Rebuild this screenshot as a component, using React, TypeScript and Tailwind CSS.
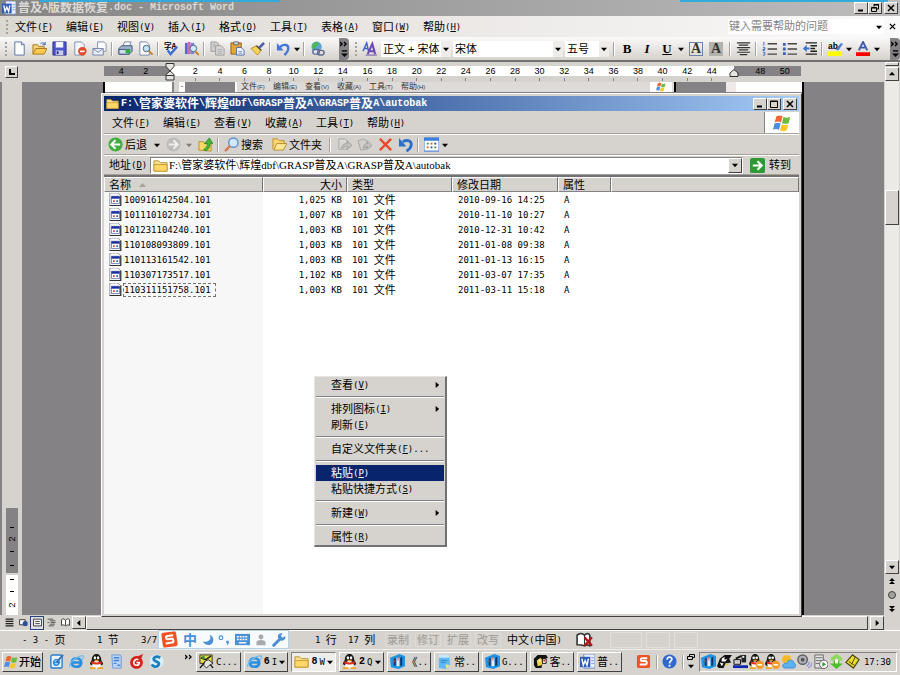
import { Fragment, useState } from 'react';
import type { ReactNode } from 'react';

const raised = 'border border-t-white border-l-white border-b-[#424142] border-r-[#424142] bg-[#d6d3ce]';
const sunken = 'border border-t-[#848284] border-l-[#848284] border-b-white border-r-white';

// Wide characters are set larger than the narrow ones, access keys like (F) are underlined
function Label({ text, bold = false }: { text: string; bold?: boolean }) {
  const runs = text.split(/([\u3000-\u9fff]+|\([A-Z]\))/).filter(Boolean);
  return (
    <span className={`inline-flex items-center whitespace-pre leading-3 ${bold ? 'font-bold' : ''}`}>
      {runs.map((run, i) => {
        if (/[\u3000-\u9fff]/.test(run)) {
          return <span key={i} className={bold ? 'text-[12px]' : 'text-[11px]'}>{run}</span>;
        }
        const key = /^\(([A-Z])\)$/.exec(run);
        return (
          <span key={i} className={bold ? "font-['Liberation_Mono',monospace] text-[10px]" : "font-['DejaVu_Sans_Mono',monospace] text-[9px]"}>
            {key ? <>(<u>{key[1]}</u>)</> : run}
          </span>
        );
      })}
    </span>
  );
}

const glyphs: Record<string, ReactNode> = {
  newDoc: <><path d="M3 1h7l3 3v11H3z" fill="#fff" stroke="#5272a8" /><path d="M10 1v3h3" fill="#cfe0f5" stroke="#5272a8" /></>,
  open: <><path d="M1 14V4h5l1 2h6v3" fill="#f8d775" stroke="#a77822" /><path d="M1 14l3-6h12l-3 6z" fill="#fbc94d" stroke="#a77822" /><path d="M9 3c2-2 4-1 5 1M14 1v3h-3" fill="none" stroke="#3a5d9e" /></>,
  save: <><path d="M1 1h14v14H1z" fill="#4b55c8" stroke="#2a2f85" /><path d="M4 1h8v6H4z" fill="#f2f4ff" /><path d="M4 10h8v5H4z" fill="#c9cdea" /><path d="M5 11h2v3H5z" fill="#2a2f85" /></>,
  permission: <><path d="M3 1h7l3 3v11H3z" fill="#f4f7fc" stroke="#7d8db0" /><circle cx="11" cy="11" r="4.5" fill="#e24b2b" /><path d="M8.500 10.200h5v1.700h-5z" fill="#fff" /></>,
  mail: <><path d="M6 1h7l2 2v8H6z" fill="#fff" stroke="#7d8db0" /><path d="M1 8h11v7H1z" fill="#e9edf8" stroke="#7382ad" /><path d="M1 8l5.500 4L12 8" fill="none" stroke="#7382ad" /></>,
  print: <><path d="M5 6l2-5h7l-2 5z" fill="#fff" stroke="#7382ad" /><path d="M1 8l3-3h11v6l-3 3H1z" fill="#9fb0cd" stroke="#3f5480" /><path d="M1 9h11v5H1z" fill="#d2dced" stroke="#3f5480" /><path d="M8 9h5v4H8z" fill="#2fae3a" /></>,
  preview: <><path d="M2 1h7l3 3v11H2z" fill="#fff" stroke="#7382ad" /><circle cx="9" cy="8" r="3.500" fill="#bfe2f7" stroke="#47617f" /><path d="M11.500 10.500l4 4" stroke="#c47e1d" strokeWidth="2" /></>,
  spell: <><text x="0" y="8" fontSize="8" fontWeight="bold" fontFamily="Noto Sans CJK SC">字A</text><path d="M4 10l3 4 7-8" fill="none" stroke="#3b6fd6" strokeWidth="2.500" /></>,
  research: <><path d="M1 2h3v12H1z" fill="#5a68c9" /><path d="M4 1h3v13H4z" fill="#d06bb0" /><path d="M7 2h4v12H7z" fill="#7d86d8" /><circle cx="10" cy="8" r="3.500" fill="#cfeafa" stroke="#47617f" /><path d="M12 11l4 4" stroke="#c47e1d" strokeWidth="2" /></>,
  copy: <><path d="M1 1h6l2 2v8H1z" fill="#d0d0d0" stroke="#9c9c9c" /><path d="M6 5h6l3 3v7H6z" fill="#d8d8d8" stroke="#9c9c9c" /><path d="M8 9h5M8 11h5M8 13h5M3 4h3M3 6h2" stroke="#aaa" /></>,
  paste: <><path d="M1 2h11v12H1z" fill="#e7a735" stroke="#8a5c14" /><path d="M4 1h5v3H4z" fill="#ddd" stroke="#666" /><path d="M7 7h5l3 3v5H7z" fill="#f5f8ff" stroke="#4c66a6" /><path d="M9 11h4M9 13h4" stroke="#6e8ac4" /></>,
  painter: <><path d="M9 6l5-5 2 2-5 5z" fill="#4a5fae" /><path d="M1 8l6-3 5 5-4 5z" fill="#f5d45c" stroke="#b78b24" /><path d="M7 5l5 5" stroke="#444" strokeWidth="1.500" /></>,
  undo: <><path d="M4 7c4-5 10-3 9 2-.4 3-2 4-4 6" fill="none" stroke="#3f78d8" strokeWidth="2.500" /><path d="M1 2v8h7z" fill="#3f78d8" /></>,
  link: <><circle cx="7" cy="6" r="5.500" fill="#5aa5d6" /><path d="M3 3c3-3 6-2 6 0S6 5 6 8 3 8 2 6z" fill="#4ab850" /><rect x="3" y="9" width="7" height="5" rx="2.500" fill="#e6ebf5" stroke="#5a6a92" strokeWidth="1.500" /><rect x="8" y="10" width="7" height="5" rx="2.500" fill="none" stroke="#5a6a92" strokeWidth="1.500" /></>,
  styles: <><path d="M1 11L5 2l2 9M2 8h4" fill="none" stroke="#3d64c4" strokeWidth="1.500" /><path d="M6 14l5-11 3 11M8 11h5" fill="none" stroke="#6a47b5" strokeWidth="2.200" /><path d="M4 15h12" stroke="#6a47b5" /></>,
  center: <path d="M1 2h14M3 4.500h10M1 7h14M3 9.500h10M1 12h14M4 14.500h8" stroke="#333" strokeWidth="1.300" />,
  numbered: <><path d="M2 1v4M1 7h2v2H1v1h2M1 12h2v3H1" fill="none" stroke="#3b62c4" /><path d="M6 3h10M6 8.500h10M6 14h10" stroke="#444" strokeWidth="1.500" /></>,
  bullets: <><path d="M1 2h3v3H1zM1 7h3v3H1zM1 12h3v3H1z" fill="#3b62c4" /><path d="M6 3h10M6 8.500h10M6 14h10" stroke="#444" strokeWidth="1.500" /></>,
  indent: <><path d="M4 2h12M9 5h7M9 8h5M9 11h7M4 14h12" stroke="#222" strokeWidth="1.500" /><path d="M1 8l4-4v3h3v2H5v3z" fill="#3b76d8" /></>,
  highlight: <><text x="0" y="9" fontSize="9" fontWeight="bold" fontFamily="Liberation Sans">ab</text><path d="M8 9l6-7 2 1-5 7z" fill="#4a7ccc" /><path d="M0 11h15v5H0z" fill="#ff0" /></>,
  fontColor: <><path d="M3 10L7.500 1 12 10M5 7h5" fill="none" stroke="#3c5ca8" strokeWidth="2" /><path d="M0 12h15v4H0z" fill="red" /></>,
  word: <><path d="M4 0h12v15H4z" fill="#e9f0fc" stroke="#6c8bc9" /><path d="M12 4h3M12 7h3M12 10h3" stroke="#7b9bd6" /><path d="M0 3h11v11H0z" fill="#2c5bb8" /><path d="M2 5l1.500 7 2-5 2 5L9 5" fill="none" stroke="#fff" strokeWidth="1.500" /></>,
  folder: <><path d="M1 14V3h5l2 2h7v9z" fill="#fbe28c" stroke="#b8902e" /><path d="M1 7h14v7H1z" fill="#fdd867" stroke="#c99b35" /></>,
  folderOpen: <><path d="M1 13V2h5l2 2h5v4" fill="#f9d873" stroke="#bb8a27" /><path d="M2 14l3-7h11l-4 7z" fill="#fde79a" stroke="#bb8a27" /></>,
  back: <><circle cx="8" cy="8" r="7.500" fill="#3fae3c" /><path d="M8 3.500L3.500 8 8 12.500M4 8h9" fill="none" stroke="#fff" strokeWidth="2.200" /></>,
  forward: <><circle cx="8" cy="8" r="7.500" fill="#bdbcba" /><path d="M8 3.500L12.500 8 8 12.500M12 8H3" fill="none" stroke="#eee" strokeWidth="2.200" /></>,
  up: <><path d="M1 14V5h5l1 2h7v8z" fill="#fbd766" stroke="#b98d2c" /><path d="M6 13c3-1 4-3 4-6H7l5-6 4 6h-3c0 4-2 7-5 8z" fill="#44b53b" stroke="#217d1d" strokeWidth=".7" /></>,
  search: <><circle cx="10" cy="6" r="5" fill="#cfe8fb" stroke="#5b8ed3" strokeWidth="1.500" /><path d="M6.500 9.500L1 15" stroke="#d27b54" strokeWidth="2.500" /></>,
  moveTo: <><path d="M2 2h7l2 2v9H2z" fill="#d9d8d5" stroke="#a5a4a1" /><path d="M5 12c0-4 3-5 6-5V4l5 5-5 4v-3c-3 0-4 1-6 2z" fill="#c2c1be" stroke="#a09f9c" /></>,
  copyTo: <><path d="M1 4l6-2 4 3-1 8-6 1z" fill="#d0cfcc" stroke="#a5a4a1" /><path d="M7 12c0-4 2-5 4-5V4l5 5-5 4v-3z" fill="#c2c1be" stroke="#a09f9c" /></>,
  remove: <path d="M2 2l12 12M14 2L2 14" stroke="#e8492b" strokeWidth="2.500" />,
  undoBlue: <><path d="M5 5c6-3 10 0 9 4-.4 3-3 5-5 6" fill="none" stroke="#2a6fc9" strokeWidth="3" /><path d="M1 1v9h8z" fill="#2a6fc9" /></>,
  views: <><rect x="0" y="1" width="16" height="14" fill="#fff" stroke="#2e6fd0" /><path d="M0 1h16v3H0z" fill="#3b7ee0" /><path d="M3 6h2v2H3zM11 10h2v2h-2z" fill="#3b8f46" /><path d="M7 6h2v2H7zM3 10h2v2H3z" fill="#d95b2c" /><path d="M11 6h2v2h-2zM7 10h2v2H7z" fill="#2a4ea5" /></>,
  go: <><rect x="0" y="0" width="16" height="16" rx="2" fill="#2f9a35" /><path d="M3 8h9M8 3.500L12.500 8 8 12.500" fill="none" stroke="#fff" strokeWidth="2.200" /></>,
  flag: <><path d="M3 2c2-1 4-1 5.500 0L7 7.500c-2-1-3.500-1-5.500 0z" fill="#ee6633" /><path d="M9.300 2.500c2 1 3.500 1 6 0L14 8c-2 1-4 1-6 0z" fill="#6dbb3f" /><path d="M1.300 8.500c2-1 3.500-1 5.500 0L5.300 14c-2-1-3.500-1-5.300 0z" fill="#4a8fe0" /><path d="M7.700 9c2 1 3.800 1 6 0l-1.500 5.500c-2 1-4 1-6 0z" fill="#f9c728" /></>,
  file: <><path d="M1 0h10l3 3v13H1z" fill="#fff" stroke="#848284" /><path d="M14.500 3v12.500H1" fill="none" stroke="#333" strokeWidth="1.500" /><path d="M3 4h10v9H3z" fill="#fff" stroke="#5a6fae" /><path d="M3 4h10v3H3z" fill="#1b2f9f" /><path d="M5 9h2v2H5z" fill="#d33" /><path d="M9 9h2v2H9z" fill="#2858c8" /></>,
  ieDoc: <><rect x="2" y="1" width="12" height="14" rx="2" fill="#e8f4fd" stroke="#2b7fc9" strokeWidth="1.500" /><path d="M11 9c-1 4-6 4-6 0s6-4 6 0H5" fill="none" stroke="#2484d8" strokeWidth="1.500" /><path d="M8 9l7-8" stroke="#3a72b5" strokeWidth="2" /></>,
  ie: <><path d="M13 10c-1 5-10 5-10-1s10-6 10 0H4" fill="none" stroke="#2a8fe0" strokeWidth="2.800" /><path d="M1 14C-1 10 9 1 15 2c1 1 0 3-1 4" fill="none" stroke="#6fbdf2" strokeWidth="1.300" /></>,
  qq: <><path d="M1 11c0-3 2-4 2-5 0-8 10-8 10 0 0 1 2 2 2 5l-2 1H3z" fill="#181818" /><ellipse cx="8" cy="11.500" rx="4.500" ry="4" fill="#fff" /><ellipse cx="6.300" cy="4" rx="1.300" ry="1.600" fill="#fff" /><ellipse cx="9.700" cy="4" rx="1.300" ry="1.600" fill="#fff" /><path d="M4.500 6h7L8 8z" fill="#f3a51c" /><path d="M2.500 7.500c3 2 8 2 11 0v2.500c-3 1.500-8 1.500-11 0z" fill="#e0301e" /><path d="M1 14h6v2H1zM9 14h6v2H9z" fill="#f3a51c" /></>,
  qqBusy: <><path d="M0 11c0-3 2-4 2-5 0-8 9-8 9 0 0 1 2 2 2 5l-2 2H2z" fill="#181818" /><circle cx="5" cy="4" r="1.400" fill="#fff" /><circle cx="8.200" cy="4" r="1.400" fill="#fff" /><path d="M3.500 6h6l-3 2z" fill="#f3a51c" /><ellipse cx="6" cy="11.500" rx="3.500" ry="3.500" fill="#fff" /><path d="M2 7.500c3 2 6 2 9 0V10c-3 1.500-6 1.500-9 0z" fill="#e0301e" /><path d="M1 14h6v2H1z" fill="#f3a51c" /><circle cx="11.500" cy="11.500" r="4.500" fill="#f39a2b" /><path d="M9 10.700h5v1.700H9z" fill="#fff" /></>,
  page: <><path d="M3 1h9l1 2v12H4z" fill="#b9d6f7" stroke="#6c9ad6" /><path d="M5 4h6M5 7h6M5 10h3M9 12h3" stroke="#4d82d0" strokeWidth="1.500" /></>,
  redG: <><circle cx="8" cy="9" r="6.800" fill="#d8201a" /><path d="M10 6c-5-2-7 6-2 6 3 0 3-3 3-3H8" fill="none" stroke="#fff" strokeWidth="1.700" /><path d="M8 3l7-3-2 5z" fill="#d8201a" /></>,
  sBlue: <><circle cx="8" cy="8" r="7.500" fill="#d9effb" /><path d="M12 4C7 1 3 5 6 7s6 2 4 5-6 1-7-1" fill="none" stroke="#1c7fbd" strokeWidth="3" /></>,
  cjkTool: <><path d="M1 1h13v9H1z" fill="#e8df3d" stroke="#333" /><path d="M2 4l5 2 6-4M1 15l5-6 5 1 4 5" fill="none" stroke="#222" strokeWidth="1.500" /><path d="M6 8l4-2 5 4-4 2-3 3-3-3z" fill="#e4e4e4" stroke="#222" /><path d="M3 2h3v3H3z" fill="#3a9a3e" /></>,
  books: <><path d="M0 4l10-4 6 2v11l-7 3-8-2z" fill="#1d94e4" /><path d="M4 5l2-1v9l-2-1z" fill="#182c58" /><path d="M7 4h3v9H7z" fill="#e8eef5" /><path d="M11 4l2-1v9l-2 1z" fill="#10315e" /><path d="M4 6h1v3H4zM8 3h1v4H8z" fill="#e33" /></>,
  notes: <><path d="M2 1h11l1 11-4 4-8-1z" fill="#5eb8f2" /><path d="M2 1h11v3H2z" fill="#c6e8fb" /><path d="M10 16l4-4-5-1z" fill="#f3e08a" /><path d="M4 7h7M4 9h5" stroke="#2f87c9" /></>,
  face: <><path d="M1 12V5l4-4h9l2 3-3 1v4l-3 1-1 5H3z" fill="#111" /><path d="M4 7l4-3 3 4-2 4-4 1z" fill="#f4d34a" /><path d="M10 5h4v5h-4z" fill="#fff" stroke="#111" /><path d="M11 6h2v2h-2z" fill="#d22" /><path d="M6 6h2v2H6z" fill="#fff" /></>,
  bwCat: <><path d="M0 13l3-8 5-4h8l-3 4 2 4-6 1-2 5H2z" fill="#111" /><path d="M5 5l3-2v3l3-1-2 3H5zM3 9l4 1-2 3z" fill="#fff" /><path d="M9 10h3v2H9z" fill="#e8c82c" /></>,
  network: <><path d="M1 6h7v5H1z" fill="#ccc" stroke="#111" /><path d="M9 1h5v8H9z" fill="#222" /><path d="M10 2h2v2h-2z" fill="#fff" /><path d="M0 12h16v3H0z" fill="#1326b5" /><path d="M3 5l6-3" stroke="#111" strokeWidth="2" /></>,
  weather: <><circle cx="6" cy="6" r="5" fill="#fbb829" /><path d="M4 15c-4-1-2-6 2-5 1-5 8-4 8 0 3 1 2 5-1 5z" fill="#5cb2f0" stroke="#3f92d5" /></>,
  speaker: <><circle cx="6" cy="6" r="5" fill="#aeb0b5" stroke="#5d5f66" strokeWidth="1.500" /><circle cx="6" cy="6" r="2" fill="#555" /><path d="M10 13c2-1 3-2 3-5M12 15c3-2 4-4 4-6" fill="none" stroke="#8f97d8" strokeWidth="1.300" /></>,
  server: <><path d="M2 1h9v14H2z" fill="#e3e3e3" stroke="#666" /><path d="M3 4h7M3 7h7M3 10h4" stroke="#666" /><circle cx="11.500" cy="11" r="4.500" fill="#fff" stroke="#555" /><path d="M10 8.500l4 2.500-4 2.500z" fill="#25a32d" /></>,
  download: <><path d="M8 0l6 4v3h-3l-3-3-3 3H2V4z" fill="#8bdc4e" /><path d="M5 7h6v3h4l-7 6-7-6h4z" fill="#4bbf27" /><path d="M6.500 6h3v4h-3z" fill="#fff" /></>,
  tag: <><path d="M1 9l7-8 7 5-6 9z" fill="#e9dc2a" stroke="#4f4a10" strokeWidth="1.300" /><path d="M4 8l6 4M11 3l-4 8" stroke="#4f4a10" /></>,
  sogou: <><rect x="1" y="1" width="14" height="14" rx="2" fill="#ee5423" /><path d="M12 4.500H6.500c-2 0-2 3 0 3H10c2 0 2 3.700 0 3.700H4" fill="none" stroke="#fff" strokeWidth="2" /></>,
  sogouTilt: <g transform="rotate(-8 8 8)"><rect x="1" y="1" width="14" height="14" rx="2" fill="#ee5423" /><path d="M12 4.500H6.500c-2 0-2 3 0 3H10c2 0 2 3.700 0 3.700H4" fill="none" stroke="#fff" strokeWidth="2" /></g>,
  help: <><circle cx="8" cy="8" r="7.500" fill="#2f68cf" /><path d="M5.500 6c0-4 5.500-3 5 0-.4 1.500-2.500 1.500-2.500 4" fill="none" stroke="#fff" strokeWidth="1.800" /><path d="M7 11.500h2v2H7z" fill="#fff" /></>,
  moon: <path d="M10 1c4 6-2 11-9 9 4 7 14 6 14-2 0-4-2-6-5-7z" fill="#4a8fd6" />,
  punct: <><circle cx="4" cy="5" r="2.500" fill="none" stroke="#4a8fd6" strokeWidth="1.500" /><path d="M11 9h3c1 3 0 5-2 6v-3h-1z" fill="#4a8fd6" /></>,
  keyboard: <><rect x="0" y="2" width="16" height="12" fill="#4a8fd6" /><path d="M2 5h12M2 8h12" stroke="#fff" strokeWidth="1.500" strokeDasharray="2 1" /><path d="M4 11.500h8" stroke="#fff" strokeWidth="1.500" /></>,
  person: <><circle cx="8" cy="4" r="3.300" fill="#aaa" /><path d="M2 15V11c0-4 12-4 12 0v4z" fill="#aaa" /></>,
  wrench: <><path d="M2 14l8-8" stroke="#4a8fd6" strokeWidth="3.500" strokeLinecap="round" /><path d="M15 3.500l-3 2-2-2 2-3c-4-1-6 2-5 5l3 3c3 1 6-1 5-5z" fill="#4a8fd6" /></>,
  bookX: <><path d="M1 12V3c2-2 5-2 7 0 2-2 4-2 5 0v10c-2-1-4-1-5 0-2-1-5-1-7-1z" fill="#fff" stroke="#333" strokeWidth="1.500" /><path d="M8 3v10" stroke="#333" /><path d="M8 5l7 8M15 5l-7 8" stroke="#b01818" strokeWidth="2.200" /></>,
  normalView: <path d="M1 2h14M1 6h14M1 10h14M1 14h14" stroke="#222" strokeWidth="1.800" />,
  webView: <><path d="M1 3h10v9H1z" fill="#fff" stroke="#222" strokeWidth="1.500" /><circle cx="11" cy="10" r="4.500" fill="#2b4f9b" /></>,
  printView: <><path d="M1 2h14v12H1z" fill="#fff" stroke="#222" strokeWidth="1.500" /><path d="M4 6h8M4 10h8" stroke="#222" strokeWidth="1.500" /></>,
  outline: <path d="M1 2h10M5 5h10M1 8h3M7 8h8M5 11h9M3 14h9" stroke="#444" strokeWidth="1.500" />,
  reading: <path d="M8 4C5 1 3 1 1 3v10c2-1 4-1 7 1 3-2 5-2 7-1V3c-2-2-4-2-7 1v9" fill="#fff" stroke="#222" strokeWidth="1.500" />,
};

function Icon({ name, size = 'size-[15px]' }: { name: string; size?: string }) {
  return (
    <svg viewBox="0 0 16 16" className={`${size} shrink-0`} aria-hidden="true">
      {glyphs[name]}
    </svg>
  );
}

function Arrow({ dir = 'down' }: { dir?: 'down' | 'up' | 'left' | 'right' }) {
  const shapes = { down: 'M0 2h7L3.500 6z', up: 'M0 5h7L3.500 1z', left: 'M5 0v7L1 3.500z', right: 'M2 0v7l4-3.500z' };
  return (
    <svg viewBox="0 0 7 7" className="size-[6px] shrink-0" aria-hidden="true">
      <path d={shapes[dir]} />
    </svg>
  );
}

function Tool({ name, label }: { name: string; label: string }) {
  return (
    <button type="button" aria-label={label} className="flex h-5 w-5 shrink-0 items-center justify-center">
      <Icon name={name} />
    </button>
  );
}

function Caret({ label }: { label: string }) {
  return (
    <button type="button" aria-label={label} className="flex h-5 w-2 shrink-0 items-center justify-center">
      <Arrow />
    </button>
  );
}

const Divider = () => <div className="mx-[2px] h-[14px] w-[2px] shrink-0 border-l border-[#a5a29c] border-r border-r-white" />;

const Overflow = () => (
  <button type="button" aria-label="工具栏选项" className="flex h-[22px] w-[10px] shrink-0 flex-col items-center justify-between rounded-r-sm bg-[#848284] py-[3px]">
    <svg viewBox="0 0 8 6" className="h-[6px] w-2"><path d="M0 1l2 2-2 2M4 1l2 2-2 2" fill="none" stroke="#000" strokeWidth="1.500" /></svg>
    <svg viewBox="0 0 8 8" className="size-[7px]"><path d="M1 1h6" stroke="#000" strokeWidth="1.500" /><path d="M0 4h8L4 8z" /></svg>
  </button>
);

const Grip = () => (
  <div className="flex w-[6px] shrink-0 flex-col items-center gap-[2px]">
    {[0, 1, 2, 3].map((i) => <span key={i} className="size-[2px] bg-[#a5a29c]" />)}
  </div>
);

function Combo({ label, value, width }: { label: string; value: string; width: string }) {
  return (
    <div className={`relative ml-[2px] h-4 shrink-0 bg-white ${width}`}>
      <select aria-label={label} defaultValue={value} className="block h-[14px] w-full appearance-none pl-[2px] text-[11px] leading-4 outline-none">
        <option>{value}</option>
      </select>
      <span className="pointer-events-none absolute inset-y-0 right-0 flex w-[10px] items-center justify-center bg-[#efedea]"><Arrow /></span>
    </div>
  );
}

function CaptionButtons({ restore = false }: { restore?: boolean }) {
  const button = `flex h-3 w-[14px] items-center justify-center ${raised}`;
  return (
    <div className="ml-auto flex shrink-0 pr-[2px]">
      <button type="button" aria-label="最小化" className={button}>
        <svg viewBox="0 0 8 8" className="size-2"><path d="M1 6.500h5" stroke="#000" strokeWidth="2" /></svg>
      </button>
      <button type="button" aria-label={restore ? '还原' : '最大化'} className={button}>
        <svg viewBox="0 0 8 8" className="size-2">
          {restore
            ? <path d="M3 2.500V.5h4.500V5H5.500M.5 3.500h5v4h-5zM3 1h5M.5 4h5" fill="none" stroke="#000" />
            : <path d="M.5 1h7v6.500h-7zM.5 1.500h7" fill="none" stroke="#000" />}
        </svg>
      </button>
      <button type="button" aria-label="关闭" className={`ml-[2px] ${button}`}>
        <svg viewBox="0 0 8 8" className="size-2"><path d="M1 1l6 6M7 1L1 7" stroke="#000" strokeWidth="1.500" /></svg>
      </button>
    </div>
  );
}

const wordMenus = ['文件(F)', '编辑(E)', '视图(V)', '插入(I)', '格式(O)', '工具(T)', '表格(A)', '窗口(W)', '帮助(H)'];
const folderMenus = ['文件(F)', '编辑(E)', '查看(V)', '收藏(A)', '工具(T)', '帮助(H)'];

function WordHeader() {
  return (
    <header className="shrink-0">
      <div className="relative flex h-4 items-center bg-linear-to-r from-[#858585] to-[#bdbdbd] pl-[2px] text-[#dddad5]">
        <div className="absolute left-10 top-0 h-[2px] w-60 bg-[#35a9d8]" />
        <div className="absolute right-3 top-0 h-[2px] w-52 bg-[#35a9d8]" />
        <Icon name="word" size="size-[14px]" />
        <h1 className="ml-[2px] flex"><Label bold text="普及A版数据恢复.doc - Microsoft Word" /></h1>
        <CaptionButtons restore />
      </div>
      <div className="flex h-[21px] items-center bg-linear-to-r from-[#dbd7d1] via-[#ebe8e6] to-[#fbfafa] pl-1">
        <Grip />
        <nav className="ml-[5px] flex">
          {wordMenus.map((item) => (
            <button key={item} type="button" className="flex w-[51px] items-center"><Label text={item} /></button>
          ))}
        </nav>
        <div className="ml-auto flex h-[15px] w-[156px] items-center bg-white pr-[2px]">
          <input aria-label="键入需要帮助的问题" placeholder="键入需要帮助的问题" className="h-[15px] min-w-0 flex-1 pl-px text-[11px] outline-none placeholder:text-[#848284]" />
          <Arrow />
        </div>
        <button type="button" aria-label="关闭文档" className="mx-1 flex w-2 justify-center">
          <svg viewBox="0 0 8 8" className="size-[7px]"><path d="M1 1l6 6M7 1L1 7" stroke="#000" strokeWidth="1.500" /></svg>
        </button>
      </div>
      <div className="flex h-[23px] items-center bg-linear-to-b from-[#fbfafa] to-[#d6d2cc] pl-[3px]">
        <Grip />
        <Tool name="newDoc" label="新建" />
        <Tool name="open" label="打开" />
        <Tool name="save" label="保存" />
        <Tool name="permission" label="权限" />
        <Tool name="mail" label="电子邮件" />
        <Divider />
        <Tool name="print" label="打印" />
        <Tool name="preview" label="打印预览" />
        <Divider />
        <Tool name="spell" label="拼写和语法" />
        <Tool name="research" label="信息检索" />
        <Divider />
        <Tool name="copy" label="复制" />
        <Tool name="paste" label="粘贴" />
        <Tool name="painter" label="格式刷" />
        <Divider />
        <Tool name="undo" label="撤消" />
        <Caret label="撤消列表" />
        <Divider />
        <Tool name="link" label="超链接" />
        <div className="w-3 shrink-0" />
        <Overflow />
        <div className="w-1 shrink-0" />
        <Grip />
        <Tool name="styles" label="格式窗格" />
        <Combo label="样式" value="正文 + 宋体" width="w-[70px]" />
        <Combo label="字体" value="宋体" width="w-[110px]" />
        <Combo label="字号" value="五号" width="w-[44px]" />
        <div className="w-[2px] shrink-0" />
        <Divider />
        <div className="flex font-['Liberation_Serif',serif] text-[13px] leading-4">
          <button type="button" aria-label="加粗" className="w-5 font-bold">B</button>
          <button type="button" aria-label="倾斜" className="w-5 font-bold italic">I</button>
          <button type="button" aria-label="下划线" className="w-5 font-bold underline">U</button>
        </div>
        <Caret label="下划线样式" />
        <div className="flex gap-[6px] px-1 font-['Liberation_Serif',serif] text-[14px] font-bold leading-3 text-[#333]">
          <button type="button" aria-label="字符边框" className="h-[14px] w-[14px] border border-[#6b82b0]">A</button>
          <button type="button" aria-label="字符底纹" className="h-[14px] w-[14px] bg-[#b5b2ad]">A</button>
        </div>
        <Divider />
        <Tool name="center" label="居中" />
        <Divider />
        <Tool name="numbered" label="编号" />
        <Tool name="bullets" label="项目符号" />
        <Tool name="indent" label="增加缩进量" />
        <Divider />
        <Tool name="highlight" label="突出显示" />
        <Caret label="突出显示颜色" />
        <Tool name="fontColor" label="字体颜色" />
        <Caret label="字体颜色列表" />
        <div className="ml-auto flex"><Overflow /></div>
      </div>
      <div className="h-[2px] bg-[#737173]" />
    </header>
  );
}

function Ruler() {
  const numbers = Array.from({ length: 22 }, (_, i) => (i + 1) * 2);
  const tick = "flex-1 text-center after:mx-auto after:mt-[2px] after:block after:h-[3px] after:w-px after:bg-[#848284] after:content-['']";
  return (
    <div className="flex h-5 shrink-0 pl-[5px] pt-1">
      <button type="button" aria-label="左对齐制表符" className={`mr-[86px] flex h-3 w-[13px] items-center justify-center ${raised}`}>
        <svg viewBox="0 0 6 6" className="size-[6px]"><path d="M1 0v5h5" fill="none" stroke="#000" strokeWidth="2" /></svg>
      </button>
      <div className="relative mr-[83px] flex h-[10px] flex-1 bg-white font-['Liberation_Sans',sans-serif] text-[9px] leading-[10px]">
        <div className="flex w-[66px] bg-[#848284] pl-[5px] pr-3"><span className="flex-1 text-center">4</span><span className="flex-1 text-center">2</span></div>
        <div className="flex flex-1 pl-[13px] pr-[10px]">
          {numbers.map((n) => <span key={n} className={tick}>{n}</span>)}
        </div>
        <div className="flex w-[67px] bg-[#848284] pl-[14px] pr-1"><span className="flex-1 text-center">48</span><span className="flex-1 text-center">50</span></div>
        <svg viewBox="0 0 10 18" className="absolute -top-[3px] left-[61px] h-[18px] w-[10px]"><path d="M1 .5h8v3L5 8l4 3.500v5.500H1v-5.500L5 8 1 3.500zM1 12.500h8" fill="#e7e5e2" stroke="#333" /></svg>
        <svg viewBox="0 0 10 8" className="absolute right-[62px] top-[3px] h-2 w-[10px]"><path d="M5 .5L9 4v3.500H1V4z" fill="#e7e5e2" stroke="#333" /></svg>
      </div>
    </div>
  );
}

function VerticalRuler() {
  return (
    <div className="flex w-[22px] shrink-0 flex-col justify-end border-l-2 border-[#848284] pl-1 text-[9px] leading-3">
      <div className="flex h-[65px] w-3 flex-col items-center justify-around bg-[#848284] pb-1 pt-4">
        <span className="h-px w-1 border-t" /><span className="-rotate-90">2</span><span className="h-px w-1 border-t" /><span className="mt-2 h-px w-1 border-t" />
      </div>
      <div className="mt-[2px] flex h-10 w-3 flex-col items-center justify-around bg-white">
        <span className="h-px w-1 border-t" /><span className="mt-1 h-px w-1 border-t" /><span className="-rotate-90">2</span>
      </div>
    </div>
  );
}

// Top edge of the picture that is embedded in the document
function EmbeddedStrip() {
  return (
    <div className="flex h-[10px] overflow-hidden bg-[#dedad8] text-[8px] leading-[9px] text-[#333]">
      <div className="w-[67px] bg-white" />
      <div className="w-[7px] border-l-2 border-[#848284] bg-[#d6d3ce]" />
      <div className="w-[6px] bg-white text-center leading-[8px]">-</div>
      <div className="w-[50px] bg-[#848284]" />
      <div className="flex flex-1 border-l-2 border-white pl-1">
        {folderMenus.map((item) => {
          const [, name, key] = /^(.+)\((.)\)$/.exec(item)!;
          return <span key={item} className="w-8 whitespace-nowrap">{name}<span className="text-[6px]">({key})</span></span>;
        })}
      </div>
      <div className="flex w-[22px] justify-center bg-white"><Icon name="flag" size="size-[10px]" /></div>
      <div className="ml-[2px] w-[52px] border-l-2 border-black bg-[#848284]" />
      <div className="w-[10px] bg-[#efe9ea]" />
      <div className="w-[66px] bg-white" />
    </div>
  );
}

const files = [
  { name: '100916142504.101', size: '1,025 KB', date: '2010-09-16 14:25' },
  { name: '101110102734.101', size: '1,007 KB', date: '2010-11-10 10:27' },
  { name: '101231104240.101', size: '1,003 KB', date: '2010-12-31 10:42' },
  { name: '110108093809.101', size: '1,003 KB', date: '2011-01-08 09:38' },
  { name: '110113161542.101', size: '1,003 KB', date: '2011-01-13 16:15' },
  { name: '110307173517.101', size: '1,102 KB', date: '2011-03-07 17:35' },
  { name: '110311151758.101', size: '1,003 KB', date: '2011-03-11 15:18' },
];

function FileTable() {
  const th = 'h-[15px] border-b border-r border-b-[#848284] border-r-[#737173] border-l border-l-white border-t border-t-white bg-[#d6d3ce] p-0 px-1 text-left font-normal leading-3';
  return (
    <div className="flex-1 border-t-2 border-[#737173] bg-[linear-gradient(to_right,#f7f7f7_159px,#ffffff_159px)]">
      <table className="w-full table-fixed border-separate border-spacing-0">
        <colgroup>
          <col className="w-[159px]" /><col className="w-[84px]" /><col className="w-[105px]" />
          <col className="w-[106px]" /><col className="w-[53px]" /><col />
        </colgroup>
        <thead>
          <tr>
            <th className={th}>
              <span className="flex items-center gap-2">
                <Label text="名称" />
                <svg viewBox="0 0 7 4" className="h-1 w-[7px]"><path d="M0 4h7L3.500 0z" fill="#a5a29c" /></svg>
              </span>
            </th>
            <th className={th}><span className="flex justify-end"><Label text="大小" /></span></th>
            <th className={th}><span className="flex"><Label text="类型" /></span></th>
            <th className={th}><span className="flex"><Label text="修改日期" /></span></th>
            <th className={th}><span className="flex"><Label text="属性" /></span></th>
            <th className={th} aria-label="空" />
          </tr>
        </thead>
        <tbody>
          {files.map((file, i) => (
            <tr key={file.name} className="h-[15px]">
              <td className="p-0 pl-[5px]">
                <span className="flex h-[15px] items-center">
                  <Icon name="file" size="size-[13px]" />
                  <span className={`ml-px flex h-[14px] items-center border pr-1 ${i === files.length - 1 ? 'border-dashed border-[#737173]' : 'border-transparent'}`}>
                    <Label text={file.name} />
                  </span>
                </span>
              </td>
              <td className="p-0 pr-[5px]"><span className="flex justify-end"><Label text={file.size} /></span></td>
              <td className="p-0 pl-[5px]"><span className="flex"><Label text="101 文件" /></span></td>
              <td className="p-0 pl-[6px]"><span className="flex"><Label text={file.date} /></span></td>
              <td className="p-0 pl-[6px]"><span className="flex"><Label text="A" /></span></td>
              <td className="p-0" />
            </tr>
          ))}
        </tbody>
      </table>
    </div>
  );
}

const contextMenu = [
  [{ text: '查看(V)', sub: true }],
  [{ text: '排列图标(I)', sub: true }, { text: '刷新(E)' }],
  [{ text: '自定义文件夹(F)...' }],
  [{ text: '粘贴(P)' }, { text: '粘贴快捷方式(S)' }],
  [{ text: '新建(W)', sub: true }],
  [{ text: '属性(R)' }],
] as { text: string; sub?: boolean }[][];

function ContextMenu() {
  const [active, setActive] = useState('粘贴(P)');
  return (
    <div role="menu" className="absolute left-[212px] top-[282px] w-[133px] border border-b-2 border-r-2 border-t-[#e7e5e2] border-l-[#e7e5e2] border-b-[#737173] border-r-[#737173] bg-[#d6d3ce] px-px">
      {contextMenu.map((group, i) => (
        <Fragment key={i}>
          {i > 0 && <div className="my-[3px] h-[2px] border-t border-[#848284] border-b border-b-white" />}
          {group.map((item) => (
            <button
              key={item.text}
              type="button"
              role="menuitem"
              onMouseEnter={() => setActive(item.text)}
              className={`flex h-4 w-full items-center justify-between pl-[15px] pr-1 ${active === item.text ? 'bg-[#08246b] text-white' : ''}`}
            >
              <Label text={item.text} />
              {item.sub && <Arrow dir="right" />}
            </button>
          ))}
        </Fragment>
      ))}
    </div>
  );
}

function Explorer() {
  const path = 'F:\\管家婆软件\\辉煌dbf\\GRASP普及A\\GRASP普及A\\autobak';
  const row = 'flex shrink-0 items-center border-b border-[#a5a29c] border-t border-t-white';
  return (
    <section className="absolute -bottom-[2px] left-[79px] right-[82px] top-[11px] z-10 flex flex-col border border-l-white border-t-white border-b-[#424142] border-r-[#424142] bg-[#d6d3ce] p-[2px]">
      <div className="flex h-[15px] shrink-0 items-center bg-linear-to-r from-[#08246b] to-[#a5cbf7] pl-[2px] text-white">
        <Icon name="folder" size="size-[13px]" />
        <h2 className="ml-[2px] flex"><Label bold text={path} /></h2>
        <CaptionButtons />
      </div>
      <div className="mt-px flex h-[22px] shrink-0 items-stretch border-b border-[#a5a29c]">
        <nav className="flex flex-1 pl-2">
          {folderMenus.map((item) => (
            <button key={item} type="button" className="flex w-[51px] items-center"><Label text={item} /></button>
          ))}
        </nav>
        <div className="flex w-[35px] items-center justify-center border-l border-[#848284] bg-white"><Icon name="flag" size="size-[18px]" /></div>
      </div>
      <div className={`${row} h-[21px] pl-1`}>
        <button type="button" className="flex items-center gap-[2px]"><Icon name="back" /><Label text="后退" /></button>
        <div className="ml-[6px] flex"><Caret label="后退列表" /></div>
        <div className="ml-[2px] flex"><Tool name="forward" label="前进" /></div>
        <div className="ml-[2px] flex opacity-40"><Caret label="前进列表" /></div>
        <div className="ml-[2px] flex"><Tool name="up" label="向上" /></div>
        <Divider />
        <button type="button" className="ml-[3px] flex items-center gap-[2px]"><Icon name="search" /><Label text="搜索" /></button>
        <button type="button" className="ml-[9px] flex items-center gap-[2px]"><Icon name="folderOpen" /><Label text="文件夹" /></button>
        <div className="w-[5px]" />
        <Divider />
        <div className="w-px" />
        <Tool name="moveTo" label="移至" />
        <Tool name="copyTo" label="复制到" />
        <div className="w-px" />
        <Tool name="remove" label="删除" />
        <Tool name="undoBlue" label="撤消" />
        <Divider />
        <Tool name="views" label="查看" />
        <Caret label="查看方式" />
      </div>
      <div className={`${row} h-5 pl-[5px]`}>
        <label htmlFor="address" className="flex w-[41px]"><Label text="地址(D)" /></label>
        <div className={`flex h-[17px] flex-1 items-center bg-white pl-[2px] ${sunken}`}>
          <Icon name="folder" />
          <input id="address" defaultValue={path} className="h-[15px] min-w-0 flex-1 pl-px font-['Liberation_Serif','Noto_Sans_CJK_SC',serif] text-[11px] outline-none" />
          <button type="button" aria-label="地址列表" className={`flex h-[15px] w-[14px] items-center justify-center ${raised}`}><Arrow /></button>
        </div>
        <button type="button" className="ml-[7px] mr-2 flex items-center gap-1"><Icon name="go" /><Label text="转到" /></button>
      </div>
      <FileTable />
      <ContextMenu />
    </section>
  );
}

function HorizontalScroll() {
  const views = ['normalView', 'webView', 'printView', 'outline', 'reading'];
  const labels = ['普通视图', 'Web 版式视图', '页面视图', '大纲视图', '阅读版式'];
  return (
    <div className="flex h-[15px] shrink-0 items-center pl-[2px]">
      {views.map((view, i) => (
        <button key={view} type="button" aria-label={labels[i]} className={`flex h-[14px] w-[14px] items-center justify-center ${view === 'printView' ? 'border border-[#29417b] bg-[#dfe0e6]' : ''}`}>
          <Icon name={view} size="size-[9px]" />
        </button>
      ))}
      <button type="button" aria-label="向左滚动" className={`flex h-[13px] w-[14px] items-center justify-center ${raised}`}><Arrow dir="left" /></button>
      <div className={`h-[14px] flex-1 ${raised}`} />
      <button type="button" aria-label="向右滚动" className={`ml-[2px] flex h-[14px] w-[14px] items-center justify-center ${raised}`}><Arrow dir="right" /></button>
    </div>
  );
}

function VerticalScroll() {
  const button = `flex h-[14px] w-[14px] shrink-0 items-center justify-center ${raised}`;
  return (
    <div className="flex w-4 shrink-0 flex-col items-center pb-[14px]">
      <div className={`mb-px h-1 w-[14px] shrink-0 ${raised}`} />
      <button type="button" aria-label="向上滚动" className={button}><Arrow dir="up" /></button>
      <div className="w-[14px] flex-1 bg-[#ebeae7] pt-[109px]"><div className={`h-[35px] w-[14px] ${raised}`} /></div>
      <button type="button" aria-label="向下滚动" className={button}><Arrow /></button>
      <div className="flex h-[42px] flex-col items-center justify-around">
        <button type="button" aria-label="前一页"><svg viewBox="0 0 8 8" className="size-[6px]"><path d="M0 4l4-4 4 4zM0 8l4-4 4 4z" /></svg></button>
        <button type="button" aria-label="选择浏览对象" className="size-2 rounded-full border border-[#424142] bg-[#a5a29c]" />
        <button type="button" aria-label="下一页"><svg viewBox="0 0 8 8" className="size-[6px]"><path d="M0 0l4 4 4-4zM0 4l4 4 4-4z" /></svg></button>
      </div>
    </div>
  );
}

function StatusBar() {
  return (
    <footer className="relative flex h-[19px] shrink-0 items-center border-t border-white">
      <span className="ml-[22px] flex w-[75px]"><Label text="- 3 - 页" /></span>
      <span className="flex w-11"><Label text="1 节" /></span>
      <span className="flex w-[174px]"><Label text="3/7" /></span>
      <span className="flex w-[33px]"><Label text="1 行" /></span>
      <span className="flex w-[37px]"><Label text="17 列" /></span>
      {['录制', '修订', '扩展', '改写'].map((mode) => (
        <span key={mode} className="mr-1 flex w-[26px] justify-center border border-[#dedbd6] text-[#9c9a94]"><Label text={mode} /></span>
      ))}
      <span className="ml-[2px] flex w-[68px]"><Label text="中文(中国)" /></span>
      <Icon name="bookX" size="h-[17px] w-[19px]" />
      <span className="ml-4 h-4 w-8 border border-[#e1deda]" />
      <span className="ml-1 h-4 w-6 border border-[#e1deda]" />
      <span className="ml-1 h-4 w-6 border border-[#e1deda]" />
      <div className="absolute -top-px left-[158px] z-20 flex h-[19px] w-[131px] items-center justify-around border border-[#b5d3e7] bg-[#f7fbfe] text-[14px] font-bold leading-4 text-[#4a8fd6]">
        <Icon name="sogouTilt" size="size-[17px]" />
        <span>中</span>
        <Icon name="moon" size="size-3" />
        <Icon name="punct" size="size-3" />
        <Icon name="keyboard" />
        <Icon name="person" size="size-3" />
        <Icon name="wrench" size="size-[14px]" />
      </div>
    </footer>
  );
}

const tasks = [
  { icon: 'cjkTool', text: 'C...' },
  { icon: 'ie', text: 'I', count: '6' },
  { icon: 'folder', text: 'W', count: '8', pressed: true },
  { icon: 'qq', text: 'Q', count: '2' },
  { icon: 'books', text: '《..' },
  { icon: 'notes', text: '常..' },
  { icon: 'books', text: 'G...' },
  { icon: 'face', text: '客..' },
  { icon: 'word', text: '普..' },
];

function Taskbar() {
  return (
    <div className="flex h-[26px] shrink-0 items-center border-t border-[#efedea] pb-[2px] pl-[2px] pr-[3px]">
      <button type="button" className={`mr-[3px] flex h-5 w-[41px] items-center justify-center gap-px ${raised}`}>
        <Icon name="flag" size="size-[14px]" /><span className="whitespace-nowrap text-[11px] font-medium leading-3">开始</span>
      </button>
      <div className="flex w-[139px] shrink-0">
        {['ieDoc', 'ie', 'qq', 'page', 'redG', 'sBlue'].map((name) => <Tool key={name} name={name} label={name} />)}
      </div>
      <button type="button" aria-label="更多" className="flex h-4 w-[11px]">
        <svg viewBox="0 0 8 6" className="h-[6px] w-2"><path d="M0 1l2 2-2 2M4 1l2 2-2 2" fill="none" stroke="#000" strokeWidth="1.300" /></svg>
      </button>
      <div className="flex min-w-0 flex-1 gap-[3px]">
        {tasks.map((task, i) => (
          <button key={i} type="button" className={`flex h-5 min-w-0 flex-1 items-center justify-between px-[2px] ${task.pressed ? `bg-[#efedea] ${sunken}` : raised}`}>
            <Icon name={task.icon} />
            {task.count && <Label bold text={task.count} />}
            <Label text={task.text} />
            {task.count && <Arrow />}
          </button>
        ))}
      </div>
      <div className="ml-3 flex"><Tool name="sogou" label="输入法" /></div>
      <Divider />
      <Tool name="help" label="帮助" />
      <Divider />
      <button type="button" aria-label="语言栏选项" className="flex w-[10px] flex-col items-center gap-[3px]">
        <svg viewBox="0 0 8 6" className="h-[6px] w-2"><path d="M2.500 2V.5h5v3H6M.5 2.500h5v3h-5z" fill="none" stroke="#000" /></svg>
        <Arrow />
      </button>
      <div className={`ml-[3px] flex h-5 items-center gap-px px-px ${sunken}`}>
        {['books', 'bwCat', 'network', 'qqBusy', 'qqBusy', 'weather', 'speaker', 'server', 'download', 'tag'].map((name, i) => (
          <Icon key={i} name={name} />
        ))}
        <time className="ml-[3px] mr-1 flex"><Label text="17:30" /></time>
      </div>
    </div>
  );
}

export default function App() {
  return (
    <div className="flex h-screen min-h-[520px] flex-col overflow-hidden bg-[#d6d3ce] font-['Liberation_Sans','Noto_Sans_CJK_SC',sans-serif] text-black">
      <WordHeader />
      <main className="flex min-h-0 flex-1">
        <div className="flex min-w-0 flex-1 flex-col">
          <Ruler />
          <div className="flex min-h-0 flex-1">
            <VerticalRuler />
            <div className="relative flex-1 bg-[#848284]">
              <div className="ml-[81px] mr-20 h-full border-x-2 border-black">
                <EmbeddedStrip />
              </div>
              <Explorer />
            </div>
          </div>
          <HorizontalScroll />
        </div>
        <VerticalScroll />
      </main>
      <StatusBar />
      <Taskbar />
    </div>
  );
}
